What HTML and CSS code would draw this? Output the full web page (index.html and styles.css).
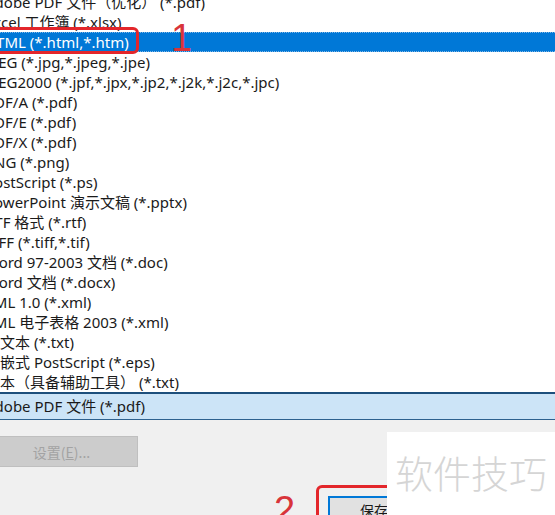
FILE: index.html
```html
<!DOCTYPE html>
<html lang="zh-CN">
<head>
    <meta charset="UTF-8">
    <title>另存为</title>
    <link rel="stylesheet" href="styles.css">
</head>
<body>
    <div class="dialog">
        <div class="type-list">
            <div class="rows">
                <div class="row">Adobe PDF 文件（优化） (*.pdf)</div>
                <div class="row">Excel 工作簿 (*.xlsx)</div>
                <div class="row selected">HTML (*.html,*.htm)</div>
                <div class="row">JPEG (*.jpg,*.jpeg,*.jpe)</div>
                <div class="row">JPEG2000 (*.jpf,*.jpx,*.jp2,*.j2k,*.j2c,*.jpc)</div>
                <div class="row">PDF/A (*.pdf)</div>
                <div class="row">PDF/E (*.pdf)</div>
                <div class="row">PDF/X (*.pdf)</div>
                <div class="row">PNG (*.png)</div>
                <div class="row">PostScript (*.ps)</div>
                <div class="row">PowerPoint 演示文稿 (*.pptx)</div>
                <div class="row">RTF 格式 (*.rtf)</div>
                <div class="row">TIFF (*.tiff,*.tif)</div>
                <div class="row">Word 97-2003 文档 (*.doc)</div>
                <div class="row">Word 文档 (*.docx)</div>
                <div class="row">XML 1.0 (*.xml)</div>
                <div class="row">XML 电子表格 2003 (*.xml)</div>
                <div class="row">纯文本 (*.txt)</div>
                <div class="row">内嵌式 PostScript (*.eps)</div>
                <div class="row">文本（具备辅助工具） (*.txt)</div>
            </div>
        </div>
        <div class="combo">Adobe PDF 文件 (*.pdf)</div>
        <div class="panel">
            <button class="settings-button" disabled>设置(<u>E</u>)...</button>
            <div class="save-row">
                <button class="save-button">保存(<u>S</u>)</button>
            </div>
        </div>

        <!-- annotations drawn over the screenshot -->
        <div class="mark mark-one"></div>
        <div class="mark-num num-one">1</div>
        <div class="mark mark-two"></div>
        <div class="mark-num num-two">2</div>
        <div class="watermark">软件技巧</div>
    </div>
</body>
</html>
```

FILE: styles.css
```css
body {
    margin: 0;
    padding: 0;
    width: 555px;
    height: 515px;
    overflow: hidden;
    background: #f0f0f0;
    font-family: "Noto Sans", "Noto Sans CJK SC", sans-serif;
}

.dialog {
    position: relative;
    width: 555px;
    height: 515px;
    overflow: hidden;
}

.type-list {
    height: 392px;
    overflow: hidden;
    background: #fff;
}

.rows {
    margin-top: -8px;
}

.row {
    height: 20px;
    line-height: 20px;
    font-size: 15px;
    color: #1a1a1a;
    white-space: nowrap;
    text-indent: -15px;
    box-sizing: border-box;
}

.row.selected {
    background: #0078d7;
    color: #fff;
    border-top: 1px dotted #7fb6e6;
    border-bottom: 1px dotted #7fb6e6;
    line-height: 18px;
}

.combo {
    height: 25px;
    line-height: 25px;
    background: #cce4f7;
    border-top: 2px solid #1d4f7c;
    border-bottom: 1px solid #2d618f;
    font-size: 15px;
    color: #1a1a1a;
    text-indent: -15px;
    white-space: nowrap;
}

.panel {
    padding-top: 16px;
}

.settings-button {
    display: block;
    margin-left: -15px;
    width: 153px;
    height: 31px;
    background: #cccccc;
    border: 1px solid #bfbfbf;
    color: #a3a3a3;
    font-family: "Noto Sans CJK SC", sans-serif;
    font-size: 14px;
    padding: 0;
}

.save-row {
    display: flex;
    padding-left: 328px;
    padding-top: 29px;
}

.save-button {
    width: 110px;
    height: 28px;
    background: #e1e1e1;
    border: 2px solid #0078d7;
    font-family: "Noto Sans CJK SC", sans-serif;
    font-size: 14px;
    color: #1a1a1a;
    padding: 0;
}

.mark {
    position: absolute;
    border: 3px solid #e3262b;
    border-radius: 6px;
}

.mark-one {
    left: -10px;
    top: 27px;
    width: 143px;
    height: 21px;
}

.mark-two {
    left: 316px;
    top: 485px;
    width: 120px;
    height: 40px;
}

.mark-num {
    position: absolute;
    color: #d8343a;
    font-family: "Liberation Sans", sans-serif;
    font-size: 38px;
    line-height: 38px;
}

.num-one {
    left: 171px;
    top: 19px;
}

.num-two {
    left: 274px;
    top: 491px;
}

.watermark {
    position: absolute;
    left: 387px;
    top: 432px;
    width: 168px;
    height: 83px;
    background: #fff;
    color: #d5d5d5;
    font-family: "Noto Sans CJK SC", sans-serif;
    font-weight: 300;
    font-size: 38px;
    line-height: 80px;
    padding-left: 8px;
    box-sizing: border-box;
    white-space: nowrap;
}
```
